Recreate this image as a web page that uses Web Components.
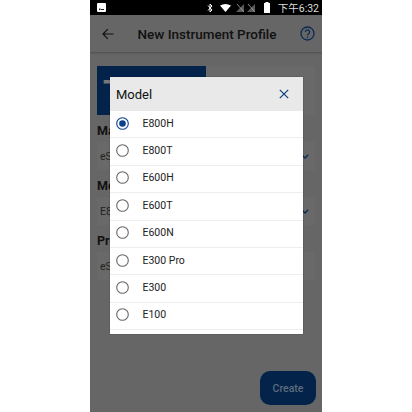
<!DOCTYPE html>
<html>
<head>
<meta charset="utf-8">
<style>
  html, body { margin: 0; height: 412px; background: #fff; overflow: hidden; }
  body { display: flex; justify-content: center; font-family: Roboto, "Noto Sans CJK SC", sans-serif; }
  #shell { margin-left: 0; }
</style>
</head>
<body>
<phone-screen id="shell">
  <status-bar></status-bar>
  <app-bar>New Instrument Profile</app-bar>
  <profile-form>
    <form-field label="Manufacturer" value="eSight"></form-field>
    <form-field label="Model" value="E800H"></form-field>
    <form-field label="Profile Name" value="eSight" plain></form-field>
  </profile-form>
  <create-button>Create</create-button>
  <model-dialog slot="dialog" title="Model">
    <radio-row checked>E800H</radio-row>
    <radio-row>E800T</radio-row>
    <radio-row>E600H</radio-row>
    <radio-row>E600T</radio-row>
    <radio-row>E600N</radio-row>
    <radio-row>E300 Pro</radio-row>
    <radio-row>E300</radio-row>
    <radio-row>E100</radio-row>
  </model-dialog>
</phone-screen>

<script>
class PhoneScreen extends HTMLElement {
  constructor() {
    super();
    this.attachShadow({ mode: 'open' });
    this.shadowRoot.innerHTML = `
      <style>
        :host { display: flex; flex-direction: column; position: relative; width: 232px; height: 412px; background: #666; overflow: hidden; }
        .overlay { position: absolute; left: 19.5px; top: 77px; }
      </style>
      <slot></slot>
      <div class="overlay"><slot name="dialog"></slot></div>
    `;
  }
}

class StatusBar extends HTMLElement {
  constructor() {
    super();
    this.attachShadow({ mode: 'open' });
    this.shadowRoot.innerHTML = `
      <style>
        :host { display: flex; align-items: center; flex: 0 0 15px; height: 15px; padding: 0 3px 0 7px; background: #000; color: #ddd; font-size: 10.5px; }
        .right { display: flex; align-items: center; margin-left: auto; }
        svg { display: block; }
      </style>
      <svg width="9" height="9" viewBox="0 0 9 9"><rect width="9" height="9" rx="1" fill="#fff"/><path d="M2 5.5h1.500v1.500H2zM4 6h3v1H4z" fill="#222"/></svg>
      <div class="right">
        <svg width="6" height="10" viewBox="0 0 6 10" style="margin-right:7px"><path d="M1 2.500l4 4.500-2 2V1l2 2-4 4.500" fill="none" stroke="#fff" stroke-width="1"/></svg>
        <svg width="11" height="8" viewBox="0 0 11 8" style="margin-right:5px"><path d="M0 1.500Q5.500-1.500 11 1.500L5.500 8z" fill="#fff"/></svg>
        <svg width="8" height="8" viewBox="0 0 8 8" style="margin-right:3px"><path d="M8 0v8H0z" fill="#5a5a5a"/><path d="M1 0l7 8" stroke="#aaa" stroke-width=".8"/></svg>
        <svg width="8" height="8" viewBox="0 0 8 8" style="margin-right:9px"><path d="M8 0v8H0z" fill="#5a5a5a"/><path d="M1 0l7 8" stroke="#aaa" stroke-width=".8"/></svg>
        <svg width="6" height="11" viewBox="0 0 6 11" style="margin-right:8px"><path d="M1.500 0h3v1H6v10H0V1h1.500z" fill="#fff"/></svg>
        <span>下午6:32</span>
      </div>
    `;
  }
}

class AppBar extends HTMLElement {
  constructor() {
    super();
    this.attachShadow({ mode: 'open' });
    this.shadowRoot.innerHTML = `
      <style>
        :host { display: flex; align-items: center; justify-content: space-between; flex: 0 0 37px; height: 37px; padding: 0 7px 0 12px; background: #666; box-shadow: 0 1px 2px rgba(0,0,0,.25); color: #111; font-size: 13.5px; font-weight: 500; position: relative; }
        svg { display: block; }
      </style>
      <svg width="12" height="12" viewBox="0 0 12 12"><path d="M11.500 6H1M5.800 1.200L1 6l4.800 4.800" fill="none" stroke="#111" stroke-width="1.200"/></svg>
      <span><slot></slot></span>
      <svg width="15" height="15" viewBox="0 0 15 15">
        <circle cx="7.500" cy="7.500" r="6.500" fill="none" stroke="#0a2a54" stroke-width="1.300"/>
        <path d="M5.400 6a2.100 2.100 0 1 1 3.300 1.700c-.8.500-1.200.9-1.200 1.800" fill="none" stroke="#0a2a54" stroke-width="1.300"/>
        <circle cx="7.500" cy="11.200" r=".8" fill="#0a2a54"/>
      </svg>
    `;
  }
}

class ProfileForm extends HTMLElement {
  constructor() {
    super();
    this.attachShadow({ mode: 'open' });
    this.shadowRoot.innerHTML = `
      <style>
        :host { display: flex; flex-direction: column; padding: 14px 7px 0 7px; }
        .tabs { display: flex; height: 49px; background: #696969; margin-bottom: 8px; }
        .tab { width: 109px; background: #03234a; color: #777; font-size: 30px; font-weight: 700; line-height: 49px; padding-left: 6px; box-sizing: border-box; overflow: hidden; }
        .fields { display: flex; flex-direction: column; gap: 8px; }
      </style>
      <div class="tabs"><div class="tab">T</div></div>
      <div class="fields"><slot></slot></div>
    `;
  }
}

class FormField extends HTMLElement {
  constructor() {
    super();
    this.attachShadow({ mode: 'open' });
    const chevron = this.hasAttribute('plain') ? '' : `<svg width="8" height="5" viewBox="0 0 8 5"><path d="M.8.800L4 4l3.200-3.200" fill="none" stroke="#0a2a54" stroke-width="1.300"/></svg>`;
    this.shadowRoot.innerHTML = `
      <style>
        :host { display: flex; flex-direction: column; gap: 4px; color: #111; }
        label { font-size: 12.5px; font-weight: 700; line-height: 15px; white-space: nowrap; }
        .box { display: flex; align-items: center; justify-content: space-between; height: 28px; padding: 0 6px 0 3px; background: #696969; font-size: 10.5px; color: #222; }
      </style>
      <label>${this.getAttribute('label')}</label>
      <div class="box"><span>${this.getAttribute('value')}</span>${chevron}</div>
    `;
  }
}

class CreateButton extends HTMLElement {
  constructor() {
    super();
    this.attachShadow({ mode: 'open' });
    this.shadowRoot.innerHTML = `
      <style>
        :host { display: flex; align-items: center; justify-content: center; align-self: flex-end; width: 56px; height: 34px; margin: auto 6px 7px 0; border-radius: 10px; background: #03234a; color: #5d6b7c; font-size: 10.5px; font-weight: 500; }
      </style>
      <slot></slot>
    `;
  }
}

class ModelDialog extends HTMLElement {
  constructor() {
    super();
    this.attachShadow({ mode: 'open' });
    this.shadowRoot.innerHTML = `
      <style>
        :host { display: flex; flex-direction: column; width: 193px; height: 257px; background: #fff; box-shadow: 0 0 1px rgba(0,0,0,.5); color: #111; }
        header { display: flex; align-items: center; justify-content: space-between; flex: 0 0 34px; padding: 0 14px 0 6.500px; background: #e9e9e9; font-size: 13px; }
        svg { display: block; }
        .list { display: flex; flex-direction: column; }
      </style>
      <header>
        <span>${this.getAttribute('title')}</span>
        <svg width="10" height="10" viewBox="0 0 10 10"><path d="M.8.800l8.400 8.400M9.200.800L.8 9.200" fill="none" stroke="#0a3a7a" stroke-width="1.200"/></svg>
      </header>
      <div class="list"><slot></slot></div>
    `;
  }
}

class RadioRow extends HTMLElement {
  constructor() {
    super();
    this.attachShadow({ mode: 'open' });
    const on = this.hasAttribute('checked');
    this.shadowRoot.innerHTML = `
      <style>
        :host { display: flex; align-items: center; gap: 13.500px; box-sizing: border-box; height: 27.400px; padding: 0 0 2px 6.500px; border-bottom: 1px solid #eee; font-size: 10.500px; color: #222; }
        svg { display: block; }
      </style>
      <svg width="13" height="13" viewBox="0 0 13 13">
        <circle cx="6.500" cy="6.500" r="5.800" fill="none" stroke="${on ? '#0a3f8c' : '#666'}" stroke-width="1.100"/>
        ${on ? '<circle cx="6.500" cy="6.500" r="3.300" fill="#0a3f8c"/>' : ''}
      </svg>
      <span><slot></slot></span>
    `;
  }
}

customElements.define('phone-screen', PhoneScreen);
customElements.define('status-bar', StatusBar);
customElements.define('app-bar', AppBar);
customElements.define('profile-form', ProfileForm);
customElements.define('form-field', FormField);
customElements.define('create-button', CreateButton);
customElements.define('model-dialog', ModelDialog);
customElements.define('radio-row', RadioRow);
</script>
</body>
</html>
